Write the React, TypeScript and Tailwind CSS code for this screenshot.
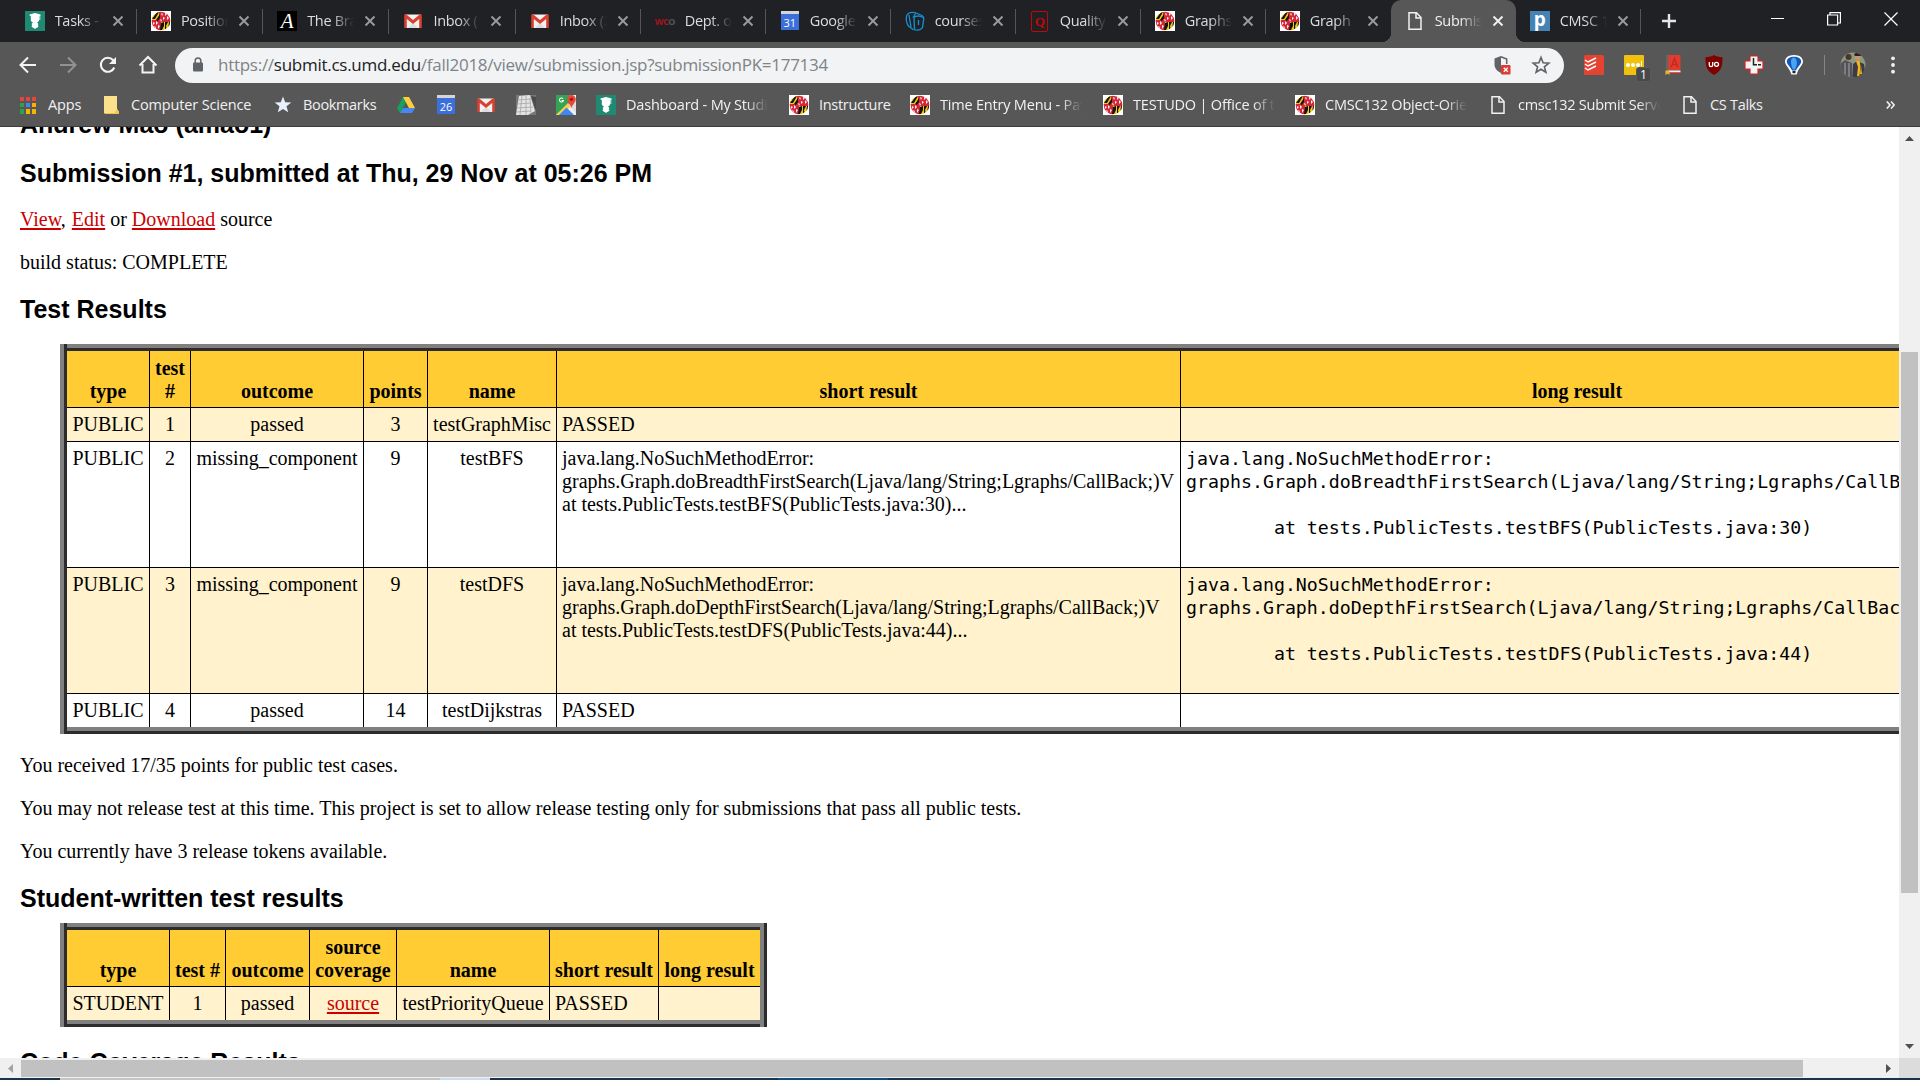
import React from "react";

const UI = "font-['Open_Sans',sans-serif]";

/* ---------- icons ---------- */

function Crest() {
  return (
    <svg width="20" height="20" viewBox="0 0 20 20">
      <rect width="20" height="20" fill="#fff" />
      <clipPath id="globe"><circle cx="10" cy="10" r="9.300" /></clipPath>
      <g clipPath="url(#globe)">
        <path d="M0 0h8v10H0z" fill="#efc91a" />
        <path d="M8 0h12v11H8z" fill="#d3283a" />
        <path d="M0 9h10v11H0z" fill="#d3283a" />
        <path d="M10 11h10v9H10z" fill="#efc91a" />
        <path d="M1 8l5-7h2L4 8zM5 9l4-6v4L7 10zM0 6l3-5h1L1 7z" fill="#17130a" />
        <path d="M10 12l3-1v4l-2 4h-2zM14 11h3l-2 4 1 5h-2zM18 11h2l-1 6-2 1z" fill="#17130a" />
        <path d="M10 2l2 1-1 2zM14 1l2 2-2 2zM12 6l2 1-2 2zM16 5l2 2-2 2zM9 8l2 1-1 2z" fill="#fbeeee" />
        <path d="M2 11l2 1-2 2zM5 10l2 2-2 2zM3 15l2 1-1 2zM7 14l2 1-2 3z" fill="#fbeeee" />
      </g>
    </svg>
  );
}

function Scholar() {
  return (
    <svg width="20" height="20" viewBox="0 0 20 20">
      <rect width="20" height="20" fill="#1f8a72" />
      <path d="M4.500 3.500L10 2l5.500 1.500v1L14.200 5v3.500c0 1.800-1 2.500-2.200 3l1.500 1.500-.8 1 .8 1.500c-.8 1-2.300 1.500-3.500 2.500-1.200-1-2.700-1.500-3.500-2.500l.8-1.500-.8-1L8 11.500c-1.200-.5-2.200-1.200-2.200-3V5l-1.300-.5z" fill="#fff" />
      <path d="M14.800 4v5" stroke="#fff" strokeWidth=".8" />
    </svg>
  );
}

function Gmail() {
  return (
    <svg width="20" height="20" viewBox="0 0 20 20">
      <path d="M2 3.500h16V17H2z" fill="#f1f1f1" />
      <path d="M5 17l5-5 5 5z" fill="#dcdcdc" />
      <path d="M1.200 4.500C1.200 3.500 2 3 3 3.200L10 9l7-5.800c1-.2 1.800.3 1.800 1.300V17h-2.600V8L10 13 3.800 8v9H1.200z" fill="#d8402f" />
    </svg>
  );
}

function Calendar({ day }: { day: string }) {
  return (
    <span className="flex h-5 w-[18px] flex-col">
      <span className="h-[3px] w-full bg-[#d5d5d5]" />
      <span className={`${UI} flex h-[16px] w-full items-center justify-center bg-[#3a6fdc] text-[11px] leading-none text-white`}>{day}</span>
    </span>
  );
}

function Page() {
  return (
    <svg width="20" height="20" viewBox="0 0 20 20" fill="none" stroke="#f1f1f1" strokeWidth="1.500">
      <path d="M4 1.800h7.500L16 6.500v11.700H4z" />
      <path d="M11 2v5h5" />
    </svg>
  );
}

function Keyboard() {
  return (
    <svg width="20" height="20" viewBox="0 0 20 20">
      <path d="M0 0h20v20H0z" fill="#777" />
      <path d="M3 1l11-1 5 16-7 4H0z" fill="#e4e4e4" />
      <path d="M2 5l12-1M1 9l14-1M1 13l16-1M0 17l15-1M6 1L4 20M10 1v19M14 3l1 15" stroke="#aaa" strokeWidth=".9" />
      <path d="M15 1l5 1v14z" fill="#4a4a4a" />
    </svg>
  );
}

function Drive() {
  return (
    <svg width="20" height="20" viewBox="0 0 20 20">
      <path d="M7 2L1 13l3 5 6-11z" fill="#15a15f" />
      <path d="M7 2h6l6 11h-6z" fill="#ffcf3f" />
      <path d="M7 13h12l-3 5H4z" fill="#4687f4" />
    </svg>
  );
}

function Maps() {
  return (
    <svg width="20" height="20" viewBox="0 0 20 20">
      <path d="M0 0h20v20H0z" fill="#efefef" />
      <path d="M0 0h14v8L0 20z" fill="#34a353" />
      <path d="M0 20L12 8l3 3-9 9z" fill="#fcd048" />
      <path d="M3 20l7.500-7.500L18 20z" fill="#4286f5" />
      <path d="M13 10L20 18V4z" fill="#ddd" />
      <path d="M15.500 0a4.300 4.300 0 014.300 4.300c0 3-3.300 5-4.300 9-1-4-4.300-6-4.300-9A4.300 4.300 0 0115.500 0z" fill="#e8453a" />
      <circle cx="15.500" cy="4.300" r="1.600" fill="#8c1f16" />
      <path d="M7 3.700A2 2 0 107.400 5.500H5.700" stroke="#fff" fill="none" strokeWidth="1.100" />
    </svg>
  );
}

function Apps() {
  const colors = ["#e8443a", "#e8443a", "#e8443a", "#2ba24c", "#4286f5", "#f5b400", "#2ba24c", "#f5b400", "#f5b400"];
  return (
    <span className="grid h-[17px] w-4 grid-cols-3 gap-[2px]">
      {colors.map((c, i) => <span key={i} style={{ background: c }} />)}
    </span>
  );
}

function Folder() {
  return (
    <svg width="20" height="20" viewBox="0 0 20 20">
      <path d="M3 1h13v13l1 1v3H3z" fill="#fce08a" />
      <path d="M3 18h11l1-3 3 1v3H4z" fill="#efc54e" />
    </svg>
  );
}

function Star() {
  return (
    <svg width="20" height="20" viewBox="0 0 20 20">
      <path d="M10 1.500l2.200 5.700 6.100.3-4.800 3.800 1.700 6L10 13.900l-5.200 3.400 1.700-6L1.700 7.500l6.100-.3z" fill="#e8f0fe" />
    </svg>
  );
}

function Course() {
  return (
    <svg width="20" height="20" viewBox="0 0 20 20" fill="none" stroke="#1193d1" strokeWidth="1.300">
      <path d="M8 18.500L3.500 15C1 12 .8 7 2 4c2-3 6-3 9-2l6 2.500c2 1 2 3 1.500 5l-1 7c-2 3-6 3-9.500 2z" />
      <path d="M9 6.500c2-2 6-2 9 0M9 6.500l.5 12M4 4l2 12M11 2L8 6.500M13.500 9v5" />
    </svg>
  );
}

function CloseX({ active }: { active?: boolean }) {
  return (
    <svg width="12" height="12" viewBox="0 0 12 12" className="shrink-0">
      <path d="M1.500 1.500l9 9M10.500 1.500l-9 9" stroke={active ? "#f1f1f1" : "#9a9b9d"} strokeWidth="1.900" />
    </svg>
  );
}

const LetterA = () => <span className="flex h-5 w-5 items-center justify-center bg-black font-['Liberation_Serif',serif] text-[21px] italic leading-none text-white">A</span>;
const Wco = () => <span className={`${UI} w-5 text-[9px] font-bold leading-none tracking-[-0.5px] text-[#a8141c]`}>WC<span className="text-[#555]">O</span></span>;
const QIcon = () => <span className="flex h-[21px] w-[17px] items-center justify-center rounded-[2px] border-[1.500px] border-[#c00808] font-['Liberation_Serif',serif] text-[13px] font-bold leading-none text-[#c00808]">Q</span>;
const PIcon = () => <span className={`${UI} flex h-5 w-5 items-center justify-center bg-[#4583b5] pb-[3px] text-[19px] font-bold leading-none text-white`}>p</span>;

/* ---------- browser chrome ---------- */

type Tab = { icon: React.ReactNode; title: string; active?: boolean; noSep?: boolean };

const tabs: Tab[] = [
  { icon: <Scholar />, title: "Tasks - My" },
  { icon: <Crest />, title: "Positions" },
  { icon: <LetterA />, title: "The Brain" },
  { icon: <Gmail />, title: "Inbox (1)" },
  { icon: <Gmail />, title: "Inbox (2)" },
  { icon: <Wco />, title: "Dept. of" },
  { icon: <Calendar day="31" />, title: "Google C" },
  { icon: <Course />, title: "courses" },
  { icon: <QIcon />, title: "Quality o" },
  { icon: <Crest />, title: "Graphs |" },
  { icon: <Crest />, title: "Graph", noSep: true },
  { icon: <Page />, title: "Submissi", active: true, noSep: true },
  { icon: <PIcon />, title: "CMSC 1" },
];

const FADE = "[mask-image:linear-gradient(to_right,#000_calc(100%-22px),transparent)]";

function TabStrip() {
  return (
    <div className="flex h-[42px] w-full bg-[#202125] pl-[10.7px]">
      {tabs.map((t, i) => (
        <div key={i} className={`relative flex shrink-0 items-center pl-[14px] ${i < 4 ? "w-[126.25px]" : "w-[125px]"} ${t.active ? "rounded-t-[10px] bg-[#575757]" : ""}`}>
          {t.active && (
            <>
              <span className="absolute bottom-0 -left-[9px] h-[9px] w-[9px] bg-[radial-gradient(circle_at_0_0,#202125_9px,#575757_9px)]" />
              <span className="absolute bottom-0 -right-[9px] h-[9px] w-[9px] bg-[radial-gradient(circle_at_100%_0,#202125_9px,#575757_9px)]" />
            </>
          )}
          <span className="flex h-5 w-5 shrink-0 items-center justify-center">{t.icon}</span>
          <span className={`${UI} ml-[10px] w-[47px] overflow-hidden whitespace-nowrap text-[14.5px] leading-5 tracking-[-0.3px] ${t.active ? "text-[#f1f1f1]" : "text-[#dcdddf]"} ${FADE}`}>{t.title}</span>
          <span className="ml-[10px] flex"><CloseX active={t.active} /></span>
          {!t.noSep && <span className="absolute right-0 top-[9px] h-[25px] w-px bg-[#54565a]" />}
        </div>
      ))}
      <svg width="14" height="14" viewBox="0 0 14 14" className="mt-[14px] ml-[21px]"><path d="M7 0v14M0 7h14" stroke="#e4e5e7" strokeWidth="2.400" /></svg>
      <div className="ml-auto flex h-[37px] items-center gap-[43px] pr-[22px]">
        <span className="h-px w-[13px] bg-white" />
        <svg width="14" height="14" viewBox="0 0 14 14" fill="none" stroke="#fff" strokeWidth="1.200"><path d="M.6 3h10v10H.6zM3 3V.6h10.400v10.400H11" /></svg>
        <svg width="14" height="14" viewBox="0 0 14 14" stroke="#fff" strokeWidth="1.200"><path d="M.5.5l13 13M13.500.5l-13 13" /></svg>
      </div>
    </div>
  );
}

function Extensions() {
  return (
    <div className="flex items-center pl-[20px]">
      <svg width="20" height="20" viewBox="0 0 20 20"><rect width="20" height="20" rx="1.500" fill="#e44332" /><path d="M1 5l3 2 8-4M1 9l3 2 8-4M1 13l3 2 8-4" stroke="#fff" strokeWidth="1.500" fill="none" /></svg>
      <span className="relative ml-5 block h-5 w-5 rounded-[1px] bg-[#f0c20e]">
        <span className="absolute left-[2px] top-[8px] flex gap-px">
          <i className="h-1 w-1 rounded-full bg-white" /><i className="h-1 w-1 rounded-full bg-white" /><i className="h-1 w-1 rounded-full bg-white" />
        </span>
        <span className="absolute left-[17px] top-[6px] h-[5px] w-px bg-white" />
        <span className={`${UI} absolute left-[12px] top-[12px] flex h-[15px] w-[15px] items-center justify-center rounded-[3px] border border-[#5a5a5a] bg-[#48494b] text-[12px] leading-none text-white`}>1</span>
      </span>
      <svg className="ml-5" width="20" height="20" viewBox="0 0 20 20"><path d="M2 0h14v19H4l-2-2z" fill="#6b6261" /><path d="M4.500 0h12v15h-12z" fill="#e23b30" /><path d="M4 15.500h12.500v2H4z" fill="#eee" /><path d="M4 17.500h12.500v1.300H4z" fill="#c52a22" /><path d="M7 12.500L10.500 3.500l3.500 9M8.300 9.500h4.500" stroke="#c22a20" strokeWidth="1.400" fill="none" /><path d="M1.500 15.500h4v4.500l-2-1.500-2 1.500z" fill="#efb52b" /></svg>
      <svg className="ml-5" width="20" height="20" viewBox="0 0 20 20"><path d="M10 0c2 1.500 5 2 8.500 2.300 0 8-.5 13.500-8.500 17.700C2 15.800 1.500 10.300 1.500 2.300 5 2 8 1.500 10 0z" fill="#800000" /><path d="M5.300 7v3a1.700 1.700 0 003.400 0V7" stroke="#fff" strokeWidth="1.300" fill="none" /><circle cx="12.500" cy="9.300" r="2" stroke="#fff" strokeWidth="1.300" fill="none" /></svg>
      <svg className="ml-5" width="20" height="20" viewBox="0 0 20 20"><path d="M6 1h8v5h5v8h-5v5H6v-5H1V6h5z" fill="#f4f4f4" stroke="#d8242a" strokeWidth="1.200" /><path d="M9.500 3v7.500M9 9.800h4M14 9.800h3" stroke="#222" strokeWidth="1.500" /></svg>
      <svg className="ml-5" width="20" height="20" viewBox="0 0 20 20"><path d="M10 0c5.500 0 9 2.800 9 6.500 0 3.500-4 6.500-5.500 10.500l-.8 2.500H7.300L6.500 17C5 13 1 10 1 6.500 1 2.800 4.500 0 10 0z" fill="#fff" /><path d="M10 1.800c4.200 0 7.200 1.900 7.200 4.700 0 3-4 5.500-5.200 9H8c-1.200-3.500-5.200-6-5.200-9 0-2.800 3-4.700 7.200-4.700z" fill="#1257b8" /><path d="M9.500 2.500C6.500 3 6 8 9 14.500h2c2.500-5 3-11-1.500-12z" fill="#4aa3ee" /><path d="M8.500 16h3v2.200h-3z" fill="#222" /></svg>
      <span className="ml-5 h-5 w-px bg-[#858585]" />
      <svg className="ml-[15px]" width="26" height="26" viewBox="0 0 26 26">
        <clipPath id="avatar"><circle cx="13" cy="13" r="12.500" /></clipPath>
        <g clipPath="url(#avatar)">
          <path d="M0 0h26v26H0z" fill="#8b9a7c" />
          <path d="M0 12l5-4 7 3 1 15H0z" fill="#55525a" /><path d="M13 12l4-3 7 3 2 14H13z" fill="#3c3a44" />
          <circle cx="8.500" cy="5" r="3" fill="#4d342a" /><circle cx="17.500" cy="5.500" r="3" fill="#c99371" /><path d="M14 2l4-2 4 2-1 2h-6z" fill="#222" />
          <path d="M16 9l2 6-1 9h2.500l1-10-1-5z" fill="#f2b61d" /><path d="M21 14l1 8h-2z" fill="#f2b61d" /><path d="M9 11v14M5 11v12" stroke="#aaa6a4" strokeWidth="1" />
        </g>
      </svg>
      <svg className="ml-[24px]" width="6" height="18" viewBox="0 0 6 18" fill="#f1f1f1"><circle cx="3" cy="2.300" r="1.900" /><circle cx="3" cy="9" r="1.900" /><circle cx="3" cy="15.700" r="1.900" /></svg>
    </div>
  );
}

function Toolbar() {
  return (
    <div className="flex h-[46px] w-full items-center bg-[#575757] pl-[18px]">
      <div className="flex w-[157px] items-center gap-5">
        <svg width="20" height="20" viewBox="0 0 20 20" fill="none" stroke="#f4f4f4" strokeWidth="2"><path d="M18 10H3M10 2.500L2.500 10l7.500 7.500" /></svg>
        <svg width="20" height="20" viewBox="0 0 20 20" fill="none" stroke="#929292" strokeWidth="2"><path d="M2 10h15M10 2.500l7.500 7.500-7.500 7.500" /></svg>
        <svg width="20" height="20" viewBox="0 0 20 20" fill="none" stroke="#f4f4f4" strokeWidth="2.100"><path d="M16.300 12.500A7 7 0 1115 5l2 2" /><path d="M18 2v7h-7z" fill="#f4f4f4" stroke="none" /></svg>
        <svg width="20" height="20" viewBox="0 0 20 20" fill="none" stroke="#f4f4f4" strokeWidth="2"><path d="M1.500 10.500L10 2l8.500 8.500M4.500 9v8.500h11V9" /></svg>
      </div>
      <div className="flex h-[35px] w-[1389px] items-center rounded-full bg-[#f1f3f4] pl-[17px] pr-[13px]">
        <svg width="12" height="16" viewBox="0 0 12 16"><rect x="1" y="5.500" width="10" height="9" rx="1" fill="#5f6368" /><path d="M3.200 6V3.800a2.800 2.800 0 015.600 0V6" stroke="#5f6368" strokeWidth="1.500" fill="none" /></svg>
        <span className={`${UI} ml-[14px] whitespace-nowrap text-[17px] leading-6 tracking-[-0.27px] text-[#7f8387]`}>
          https://<span className="text-[#202124]">submit.cs.umd.edu</span>/fall2018/view/submission.jsp?submissionPK=177134
        </span>
        <svg className="ml-auto" width="18" height="20" viewBox="0 0 18 20"><path d="M8 1L1.500 3.500v6c0 4 3 7 6.500 8.500z" fill="#5f6368" /><path d="M8 1.800l5.700 2.300v5" fill="none" stroke="#5f6368" strokeWidth="1.500" /><rect x="8" y="10" width="9.500" height="9.500" rx="1" fill="#dd3b36" /><path d="M10.800 12.800l4 4M14.800 12.800l-4 4" stroke="#fff" strokeWidth="1.300" /></svg>
        <svg className="ml-[20px]" width="20" height="20" viewBox="0 0 20 20" fill="none" stroke="#5f6368" strokeWidth="1.600"><path d="M10 2.500l2.100 5.300 5.700.4-4.400 3.600 1.500 5.500L10 14.300l-4.900 3 1.500-5.500-4.400-3.600 5.700-.4z" /></svg>
      </div>
      <Extensions />
    </div>
  );
}

const bookmarks: { icon: React.ReactNode; label?: string; slot: string; text?: string; fade?: boolean }[] = [
  { icon: <Apps />, label: "Apps", slot: "w-[83px]", text: "w-[45px]" },
  { icon: <Folder />, label: "Computer Science", slot: "w-[172px]", text: "w-[135px]" },
  { icon: <Star />, label: "Bookmarks", slot: "w-[123px]", text: "w-[85px] tracking-[-0.35px]" },
  { icon: <Drive />, slot: "w-10" },
  { icon: <Calendar day="26" />, slot: "w-10" },
  { icon: <Gmail />, slot: "w-10" },
  { icon: <Keyboard />, slot: "w-10" },
  { icon: <Maps />, slot: "w-10" },
  { icon: <Scholar />, label: "Dashboard - My Studio", slot: "w-[193px]", text: "w-[142px] tracking-[-0.2px]", fade: true },
  { icon: <Crest />, label: "Instructure", slot: "w-[121px]", text: "w-[85px] tracking-[-0.3px]" },
  { icon: <Crest />, label: "Time Entry Menu - Payroll", slot: "w-[193px]", text: "w-[142px] tracking-[-0.2px]", fade: true },
  { icon: <Crest />, label: "TESTUDO | Office of the", slot: "w-[192px]", text: "w-[142px] tracking-[-0.2px]", fade: true },
  { icon: <Crest />, label: "CMSC132 Object-Oriented", slot: "w-[193px]", text: "w-[142px] tracking-[-0.2px]", fade: true },
  { icon: <Page />, label: "cmsc132 Submit Server", slot: "w-[192px]", text: "w-[142px] tracking-[-0.25px]", fade: true },
  { icon: <Page />, label: "CS Talks", slot: "w-[206px]", text: "w-[85px] tracking-[-0.3px]" },
];

function BookmarksBar() {
  return (
    <div className="flex h-[39px] w-full items-center border-b border-[#3c3c3c] bg-[#575757] pb-[4px] pl-[18px]">
      {bookmarks.map((b, i) => (
        <div key={i} className={`flex shrink-0 items-center ${b.slot}`}>
          <span className="flex h-5 w-5 shrink-0 items-center justify-center">{b.icon}</span>
          {b.label && <span className={`${UI} ml-[10px] shrink-0 overflow-hidden whitespace-nowrap text-[14.5px] leading-5 text-[#f1f1f1] ${i < 2 ? "tracking-[-0.15px]" : ""} ${b.text} ${b.fade ? FADE : ""}`}>{b.label}</span>}
        </div>
      ))}
      <svg width="9" height="8" viewBox="0 0 9 8" fill="none" stroke="#f1f1f1" strokeWidth="1.600"><path d="M.8.5L4 4 .8 7.500M5 .5L8.200 4 5 7.500" /></svg>
    </div>
  );
}

/* ---------- page ---------- */

function Ridge({ children }: { children: React.ReactNode }) {
  return (
    <div className="ml-[60px] flex w-max">
      <div className="w-[4px] bg-[#808080]" />
      <div className="w-[3px] bg-[#2c2c2c]" />
      <div className="flex flex-col">
        <div className="h-[4px] bg-[#808080]" />
        <div className="h-[3px] bg-[#2c2c2c]" />
        {children}
        <div className="h-[4px] bg-[#808080]" />
        <div className="h-[3px] bg-[#2c2c2c]" />
      </div>
      <div className="w-[4px] bg-[#808080]" />
      <div className="w-[3px] bg-[#2c2c2c]" />
    </div>
  );
}

const H2 = "font-['Liberation_Sans',sans-serif] text-[25px] font-bold leading-[29px]";
const LINK = "text-[#c00] underline decoration-[2px] underline-offset-[2px]";
const TD = "border-l border-black py-[5px] align-top first:border-l-0 whitespace-nowrap";
const TH = "border-b border-l border-black px-0 pt-[6px] pb-[4px] align-bottom font-bold first:border-l-0";

const rows = [
  { n: 1, outcome: "passed", pts: 3, name: "testGraphMisc", short: "PASSED", long: "" },
  {
    n: 2, outcome: "missing_component", pts: 9, name: "testBFS",
    short: "java.lang.NoSuchMethodError:\ngraphs.Graph.doBreadthFirstSearch(Ljava/lang/String;Lgraphs/CallBack;)V\nat tests.PublicTests.testBFS(PublicTests.java:30)...",
    long: "java.lang.NoSuchMethodError:\ngraphs.Graph.doBreadthFirstSearch(Ljava/lang/String;Lgraphs/CallBack;)V\n\n        at tests.PublicTests.testBFS(PublicTests.java:30)\n\n",
  },
  {
    n: 3, outcome: "missing_component", pts: 9, name: "testDFS",
    short: "java.lang.NoSuchMethodError:\ngraphs.Graph.doDepthFirstSearch(Ljava/lang/String;Lgraphs/CallBack;)V\nat tests.PublicTests.testDFS(PublicTests.java:44)...",
    long: "java.lang.NoSuchMethodError:\ngraphs.Graph.doDepthFirstSearch(Ljava/lang/String;Lgraphs/CallBack;)V\n\n        at tests.PublicTests.testDFS(PublicTests.java:44)\n\n",
  },
  { n: 4, outcome: "passed", pts: 14, name: "testDijkstras", short: "PASSED", long: "" },
];

function PublicTable() {
  return (
    <Ridge>
      <table className="w-[1906px] table-fixed border-separate border-spacing-0 text-center">
        <colgroup>
          <col className="w-[82px]" /><col className="w-[41px]" /><col className="w-[173px]" /><col className="w-[64px]" />
          <col className="w-[129px]" /><col className="w-[624px]" /><col className="w-[793px]" />
        </colgroup>
        <thead>
          <tr className="bg-[#ffcc33]">
            {["type", "test #", "outcome", "points", "name", "short result", "long result"].map((h) => <th key={h} className={TH}>{h}</th>)}
          </tr>
        </thead>
        <tbody>
          {rows.map((r, i) => {
            const edge = i < rows.length - 1 ? "border-b" : "";
            return (
              <tr key={r.n} className={i % 2 === 0 ? "bg-[#fff2cc]" : "bg-white"}>
                <td className={`${TD} ${edge}`}>PUBLIC</td>
                <td className={`${TD} ${edge}`}>{r.n}</td>
                <td className={`${TD} ${edge}`}>{r.outcome}</td>
                <td className={`${TD} ${edge}`}>{r.pts}</td>
                <td className={`${TD} ${edge}`}>{r.name}</td>
                <td className={`${TD} ${edge} pl-[5px] text-left`}><span className="block whitespace-pre">{r.short}</span></td>
                <td className={`${TD} ${edge} overflow-hidden pl-[5px] text-left`}>
                  {r.long && <pre className="h-[115px] font-['DejaVu_Sans_Mono',monospace] text-[18.26px] leading-[23px]">{r.long}</pre>}
                </td>
              </tr>
            );
          })}
        </tbody>
      </table>
    </Ridge>
  );
}

function StudentTable() {
  return (
    <Ridge>
      <table className="w-[693px] table-fixed border-separate border-spacing-0 text-center">
        <colgroup>
          <col className="w-[102px]" /><col className="w-[56px]" /><col className="w-[84px]" /><col className="w-[87px]" />
          <col className="w-[153px]" /><col className="w-[109px]" /><col className="w-[102px]" />
        </colgroup>
        <thead>
          <tr className="bg-[#ffcc33]">
            {["type", "test #", "outcome", "source coverage", "name", "short result", "long result"].map((h) => <th key={h} className={TH}>{h}</th>)}
          </tr>
        </thead>
        <tbody>
          <tr className="bg-[#fff2cc]">
            <td className={TD}>STUDENT</td>
            <td className={TD}>1</td>
            <td className={TD}>passed</td>
            <td className={TD}><a className={LINK}>source</a></td>
            <td className={TD}>testPriorityQueue</td>
            <td className={`${TD} pl-[5px] text-left`}>PASSED</td>
            <td className={TD} />
          </tr>
        </tbody>
      </table>
    </Ridge>
  );
}

function PageContent() {
  return (
    <div className="h-[931px] w-[1899px] overflow-hidden bg-white font-['Liberation_Serif',serif] text-[20px] leading-[23px] text-black">
      <h2 className={`${H2} -mt-[17px] ml-5`}>Andrew Mao (amao1)</h2>
      <h2 className={`${H2} mt-[20px] ml-5`}>Submission #1, submitted at Thu, 29 Nov at 05:26 PM</h2>
      <p className="mt-[20px] ml-5"><a className={LINK}>View</a>,<a className={`${LINK} ml-[6px]`}>Edit</a> or <a className={LINK}>Download</a> source</p>
      <p className="mt-5 ml-5">build status: COMPLETE</p>
      <h2 className={`${H2} mt-[21px] mb-[20px] ml-5`}>Test Results</h2>
      <PublicTable />
      <p className="mt-5 ml-5">You received 17/35 points for public test cases.</p>
      <p className="mt-5 ml-5">You may not release test at this time. This project is set to allow release testing only for submissions that pass all public tests.</p>
      <p className="mt-5 ml-5">You currently have 3 release tokens available.</p>
      <h2 className={`${H2} mt-[21px] mb-[10px] ml-5`}>Student-written test results</h2>
      <StudentTable />
      <h2 className={`${H2} mt-[21px] ml-5`}>Code Coverage Results</h2>
    </div>
  );
}

export default function App() {
  return (
    <div className="flex h-[1080px] w-[1920px] flex-col overflow-hidden bg-white">
      <TabStrip />
      <Toolbar />
      <BookmarksBar />
      <div className="flex h-[931px]">
        <PageContent />
        <div className="flex w-[21px] flex-col items-center bg-[#f0f0f0]">
          <svg width="9" height="5" viewBox="0 0 9 5" className="mt-[9px]"><path d="M0 5L4.500 0 9 5z" fill="#505050" /></svg>
          <div className="mt-[211px] h-[541px] w-[17px] bg-[#c1c1c1]" />
          <svg width="9" height="5" viewBox="0 0 9 5" className="mt-auto mb-[9px]"><path d="M0 0l4.500 5L9 0z" fill="#505050" /></svg>
        </div>
      </div>
      <div className="flex h-[20px] bg-[#f0f0f0]">
        <div className="flex w-[1899px] items-center">
          <svg width="5" height="9" viewBox="0 0 5 9" className="ml-[8px]"><path d="M5 0L0 4.500 5 9z" fill="#a3a3a3" /></svg>
          <div className="ml-[8px] h-[17px] w-[1782px] bg-[#c1c1c1]" />
          <svg width="5" height="9" viewBox="0 0 5 9" className="ml-auto mr-[8px]"><path d="M0 0l5 4.500L0 9z" fill="#505050" /></svg>
        </div>
        <div className="w-[21px] bg-[#dcdcdc]" />
      </div>
      <div className="flex h-[2px] bg-[#1c344a]">
        <div className="ml-[60px] w-[380px] bg-[#c4c4c4]" />
        <div className="w-[50px] bg-[#cddcee]" />
        <div className="ml-[288px] w-[110px] bg-[#124a7c]" />
      </div>
    </div>
  );
}
